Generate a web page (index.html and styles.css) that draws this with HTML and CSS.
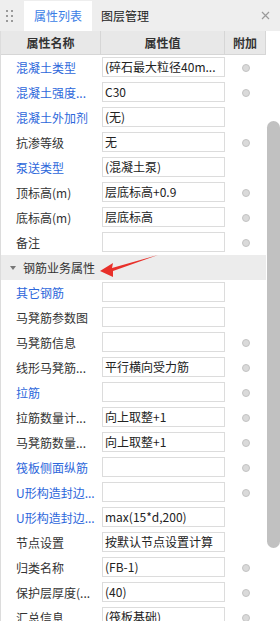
FILE: index.html
```html
<!DOCTYPE html>
<html lang="zh-CN">
<head>
    <meta charset="UTF-8">
    <meta name="viewport" content="width=device-width, initial-scale=1.0">
    <title>属性列表</title>
    <link rel="stylesheet" href="styles.css">
</head>
<body>
    <div class="panel">
        <div class="tabbar">
            <span class="grip">
                <svg width="8" height="14" viewBox="0 0 8 14">
                    <rect x="0" y="1" width="2" height="2" fill="#9a9a9a"/>
                    <rect x="5" y="1" width="2" height="2" fill="#9a9a9a"/>
                    <rect x="0" y="6" width="2" height="2" fill="#9a9a9a"/>
                    <rect x="5" y="6" width="2" height="2" fill="#9a9a9a"/>
                    <rect x="0" y="11" width="2" height="2" fill="#9a9a9a"/>
                    <rect x="5" y="11" width="2" height="2" fill="#9a9a9a"/>
                </svg>
            </span>
            <span class="tab active">属性列表</span>
            <span class="tab">图层管理</span>
            <span class="close">
                <svg width="9" height="9" viewBox="0 0 9 9">
                    <path d="M1 1 L8 8 M8 1 L1 8" stroke="#9a9a9a" stroke-width="1.2"/>
                </svg>
            </span>
        </div>

        <div class="main">
            <div class="list">
                <div class="head">
                    <div>属性名称</div>
                    <div>属性值</div>
                    <div>附加</div>
                </div>

                <div class="row"><div class="name blue">混凝土类型</div><div class="value"><div class="box">(碎石最大粒径40m...</div></div><div class="extra"><span class="dot"></span></div></div>
                <div class="row"><div class="name blue">混凝土强度...</div><div class="value"><div class="box">C30</div></div><div class="extra"><span class="dot"></span></div></div>
                <div class="row"><div class="name blue">混凝土外加剂</div><div class="value"><div class="box">(无)</div></div><div class="extra"></div></div>
                <div class="row"><div class="name">抗渗等级</div><div class="value"><div class="box">无</div></div><div class="extra"><span class="dot"></span></div></div>
                <div class="row"><div class="name blue">泵送类型</div><div class="value"><div class="box">(混凝土泵)</div></div><div class="extra"></div></div>
                <div class="row"><div class="name">顶标高(m)</div><div class="value"><div class="box">层底标高+0.9</div></div><div class="extra"><span class="dot"></span></div></div>
                <div class="row"><div class="name">底标高(m)</div><div class="value"><div class="box">层底标高</div></div><div class="extra"><span class="dot"></span></div></div>
                <div class="row"><div class="name">备注</div><div class="value"><div class="box"></div></div><div class="extra"><span class="dot"></span></div></div>

                <div class="group"><span class="caret"></span>钢筋业务属性</div>

                <div class="row"><div class="name blue">其它钢筋</div><div class="value"><div class="box"></div></div><div class="extra"></div></div>
                <div class="row"><div class="name">马凳筋参数图</div><div class="value"><div class="box"></div></div><div class="extra"></div></div>
                <div class="row"><div class="name">马凳筋信息</div><div class="value"><div class="box"></div></div><div class="extra"><span class="dot"></span></div></div>
                <div class="row"><div class="name">线形马凳筋...</div><div class="value"><div class="box">平行横向受力筋</div></div><div class="extra"><span class="dot"></span></div></div>
                <div class="row"><div class="name blue">拉筋</div><div class="value"><div class="box"></div></div><div class="extra"><span class="dot"></span></div></div>
                <div class="row"><div class="name">拉筋数量计...</div><div class="value"><div class="box">向上取整+1</div></div><div class="extra"><span class="dot"></span></div></div>
                <div class="row"><div class="name">马凳筋数量...</div><div class="value"><div class="box">向上取整+1</div></div><div class="extra"><span class="dot"></span></div></div>
                <div class="row"><div class="name blue">筏板侧面纵筋</div><div class="value"><div class="box"></div></div><div class="extra"><span class="dot"></span></div></div>
                <div class="row"><div class="name blue">U形构造封边...</div><div class="value"><div class="box"></div></div><div class="extra"><span class="dot"></span></div></div>
                <div class="row"><div class="name blue">U形构造封边...</div><div class="value"><div class="box">max(15*d,200)</div></div><div class="extra"></div></div>
                <div class="row"><div class="name">节点设置</div><div class="value"><div class="box">按默认节点设置计算</div></div><div class="extra"></div></div>
                <div class="row"><div class="name">归类名称</div><div class="value"><div class="box">(FB-1)</div></div><div class="extra"><span class="dot"></span></div></div>
                <div class="row"><div class="name">保护层厚度(...</div><div class="value"><div class="box">(40)</div></div><div class="extra"><span class="dot"></span></div></div>
                <div class="row"><div class="name">汇总信息</div><div class="value"><div class="box">(筏板基础)</div></div><div class="extra"><span class="dot"></span></div></div>
            </div>

            <div class="scroll">
                <div class="thumb"></div>
            </div>
        </div>

        <!-- 红色标注箭头 -->
        <svg class="arrow" width="70" height="32" viewBox="0 0 70 32">
            <polygon points="5,21 18,13 17,18 63,5 18,21 18,27" fill="#e8302a"/>
        </svg>
    </div>
</body>
</html>
```

FILE: styles.css
```css
body {
    margin: 0;
    width: 280px;
    height: 621px;
    overflow: hidden;
    background-color: #fff;
    font-family: "Microsoft YaHei", "Noto Sans CJK SC", sans-serif;
    font-size: 12px;
    color: #333;
}

.panel {
    position: relative;
    height: 621px;
}

.tabbar {
    display: flex;
    height: 31px;
    background-color: #eeeeee;
}

.grip {
    width: 24px;
    display: flex;
    align-items: center;
    justify-content: center;
    padding-right: 5px;
    box-sizing: border-box;
}

.tab {
    display: flex;
    align-items: center;
    padding: 0 10px;
    margin-top: 1px;
    color: #222;
    line-height: 16px;
}

.tab + .tab {
    padding-left: 9px;
}

.tab.active {
    background-color: #fff;
    color: #3a7de6;
}

.close {
    margin-left: auto;
    width: 30px;
    display: flex;
    align-items: center;
    justify-content: center;
}

.main {
    display: flex;
    height: 590px;
}

.list {
    width: 266px;
    border-left: 1px solid #dcdcdc;
    box-sizing: border-box;
}

.head {
    display: grid;
    grid-template-columns: 100px 124px 41px;
    height: 24px;
    box-sizing: border-box;
    background-color: #e8e8e8;
    border-bottom: 1px solid #d6d6d6;
    font-weight: bold;
    color: #333;
}

.head div {
    display: flex;
    align-items: center;
    justify-content: center;
    border-right: 1px solid #d6d6d6;
    line-height: 16px;
}

.row {
    display: grid;
    grid-template-columns: 100px 124px 41px;
    height: 25px;
}

.name {
    display: flex;
    align-items: center;
    padding-left: 15px;
    white-space: nowrap;
    overflow: hidden;
    line-height: 16px;
}

.name.blue {
    color: #2d67db;
}

.value {
    padding: 2px 0 3px 1px;
}

.box {
    height: 20px;
    box-sizing: border-box;
    border: 1px solid #dcdcdc;
    padding-left: 2px;
    line-height: 18px;
    white-space: nowrap;
    overflow: hidden;
    color: #222;
}

.extra {
    display: flex;
    align-items: center;
    justify-content: center;
}

.dot {
    width: 8px;
    height: 8px;
    border-radius: 50%;
    box-sizing: border-box;
    background-color: #dadada;
    border: 1px solid #c3c3c3;
}

.group {
    display: flex;
    align-items: center;
    height: 25px;
    padding-left: 9px;
    background-color: #ececec;
    line-height: 16px;
}

.caret {
    width: 0;
    height: 0;
    border-left: 3px solid transparent;
    border-right: 3px solid transparent;
    border-top: 4px solid #777;
    margin-right: 7px;
}

.scroll {
    width: 14px;
}

.thumb {
    margin: 90px 0 0 1px;
    width: 13px;
    height: 427px;
    border-radius: 7px;
    background-color: #c1c1c1;
}

.arrow {
    position: absolute;
    left: 95px;
    top: 250px;
}
```
